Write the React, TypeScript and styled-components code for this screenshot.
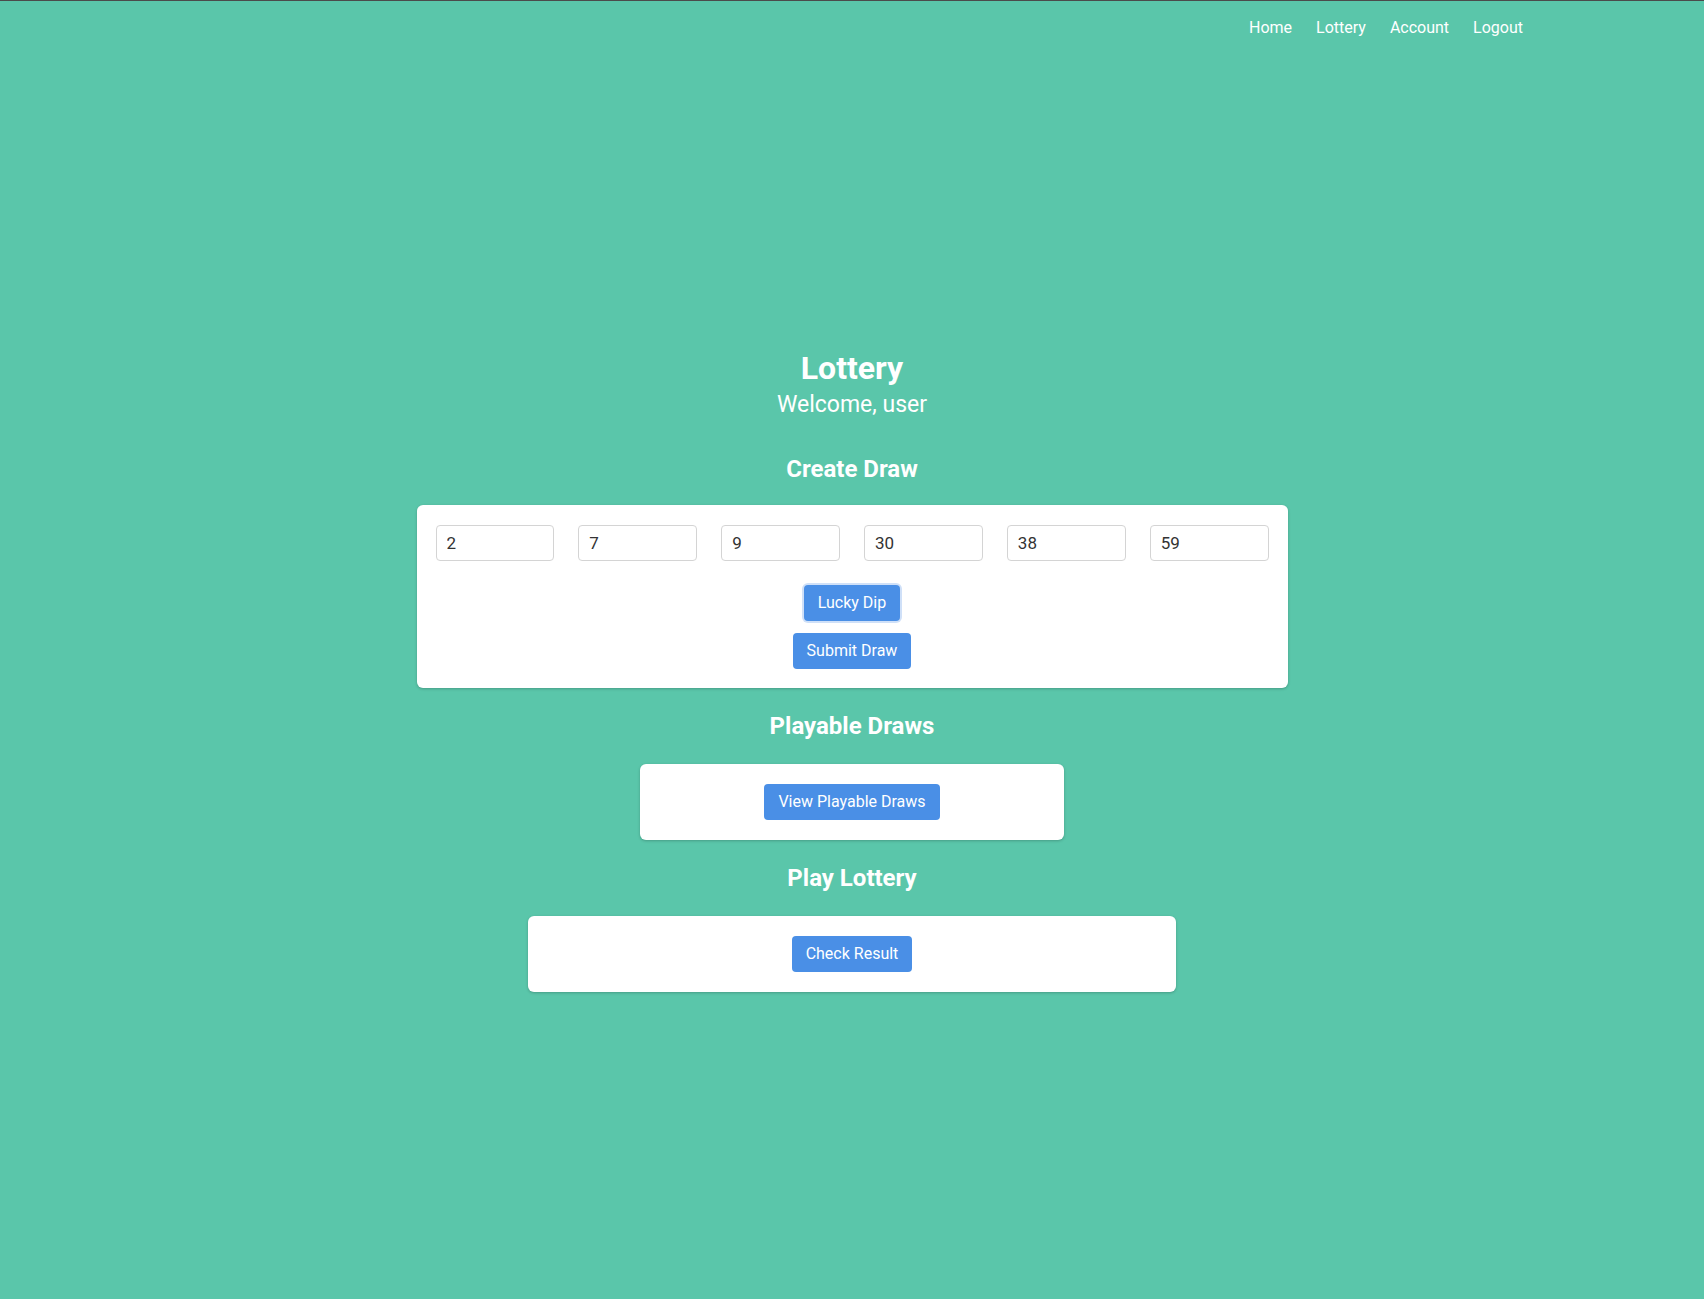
import React, { useState } from "react";
import styled, { createGlobalStyle } from "styled-components";

const GlobalStyle = createGlobalStyle`
  html, body {
    margin: 0;
    padding: 0;
    background: #5ac6aa;
    font-family: Roboto, "Liberation Sans", Arial, sans-serif;
  }
  * {
    box-sizing: border-box;
  }
`;

const Page = styled.div`
  min-height: 100vh;
  border-top: 1px solid #4b4b4b;
  background: #5ac6aa;
  color: #fff;
`;

const NavBar = styled.nav`
  display: flex;
  justify-content: flex-end;
  gap: 24px;
  padding: 17px 181px 0 0;
`;

const NavLink = styled.a`
  color: #fff;
  font-size: 16px;
  line-height: 19px;
  text-decoration: none;
  cursor: pointer;
`;

const Main = styled.main`
  display: flex;
  flex-direction: column;
  align-items: center;
  padding-top: 312px;
`;

const Title = styled.h1`
  margin: 0;
  font-size: 32px;
  line-height: 38px;
  font-weight: 700;
`;

const Welcome = styled.p`
  margin: 4px 0 0;
  font-size: 23px;
  line-height: 27px;
  font-weight: 400;
`;

const SectionTitle = styled.h2<{ first?: boolean }>`
  margin: ${(p) => (p.first ? "37px 0 22px" : "24px 0 24px")};
  font-size: 24px;
  line-height: 28px;
  font-weight: 700;
`;

const Card = styled.div<{ width: number }>`
  width: ${(p) => p.width}px;
  background: #fff;
  border-radius: 6px;
  box-shadow: 0 1px 3px rgba(0, 0, 0, 0.22);
  padding: 20px 19px 20px;
  display: flex;
  flex-direction: column;
  align-items: center;
`;

const DrawCard = styled(Card)`
  padding-bottom: 19px;
`;

const NumberRow = styled.div`
  width: 100%;
  display: grid;
  grid-template-columns: repeat(6, 1fr);
  gap: 24px;
  margin-bottom: 24px;
`;

const NumberInput = styled.input`
  width: 100%;
  height: 36px;
  border: 1px solid #d4d4d4;
  border-radius: 4px;
  padding: 0 10px;
  font-family: Roboto, "Liberation Sans", Arial, sans-serif;
  font-size: 17px;
  color: #333;
  outline: none;
`;

const Button = styled.button<{ focused?: boolean; spaced?: boolean }>`
  background: #4a8fe6;
  color: #fff;
  border: none;
  border-radius: 4px;
  padding: 8px 14px;
  font-family: Roboto, "Liberation Sans", Arial, sans-serif;
  font-size: 16px;
  line-height: 20px;
  cursor: pointer;
  margin-top: ${(p) => (p.spaced ? "12px" : "0")};
  box-shadow: ${(p) => (p.focused ? "0 0 0 2px #cfe0f8" : "none")};
`;

const App: React.FC = () => {
  const [numbers, setNumbers] = useState(["2", "7", "9", "30", "38", "59"]);

  const luckyDip = () => {
    const picked = new Set<number>();
    while (picked.size < 6) picked.add(1 + Math.floor(Math.random() * 60));
    setNumbers(
      Array.from(picked)
        .sort((a, b) => a - b)
        .map(String)
    );
  };

  return (
    <>
      <GlobalStyle />
      <Page>
        <NavBar>
          <NavLink>Home</NavLink>
          <NavLink>Lottery</NavLink>
          <NavLink>Account</NavLink>
          <NavLink>Logout</NavLink>
        </NavBar>
        <Main>
          <Title>Lottery</Title>
          <Welcome>Welcome, user</Welcome>

          <SectionTitle first>Create Draw</SectionTitle>
          <DrawCard width={871}>
            <NumberRow>
              {numbers.map((n, i) => (
                <NumberInput
                  key={i}
                  type="text"
                  value={n}
                  onChange={(e) => {
                    const next = [...numbers];
                    next[i] = e.target.value;
                    setNumbers(next);
                  }}
                />
              ))}
            </NumberRow>
            <Button focused onClick={luckyDip}>
              Lucky Dip
            </Button>
            <Button spaced>Submit Draw</Button>
          </DrawCard>

          <SectionTitle>Playable Draws</SectionTitle>
          <Card width={424}>
            <Button>View Playable Draws</Button>
          </Card>

          <SectionTitle>Play Lottery</SectionTitle>
          <Card width={648}>
            <Button>Check Result</Button>
          </Card>
        </Main>
      </Page>
    </>
  );
};

export default App;
